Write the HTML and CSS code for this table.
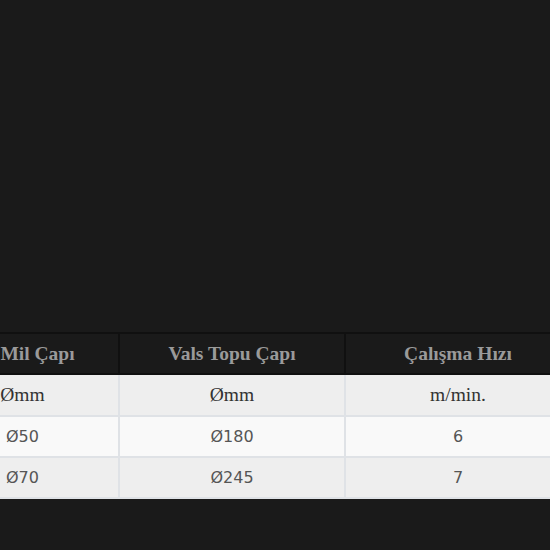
FILE: index.html
```html
<!DOCTYPE html>
<html lang="tr">
<head>
<meta charset="utf-8">
<title>Tablo</title>
<link rel="stylesheet" href="styles.css">
</head>
<body>
<div class="page">
  <div class="spacer"></div>
  <div class="table-wrap">
    <table class="spec">
      <colgroup>
        <col class="c1">
        <col class="c2">
        <col class="c3">
      </colgroup>
      <thead>
        <tr>
          <th class="first">Mil Çapı</th>
          <th>Vals Topu Çapı</th>
          <th>Çalışma Hızı</th>
        </tr>
      </thead>
      <tbody>
        <tr class="units">
          <td class="unit">Ømm</td>
          <td class="unit">Ømm</td>
          <td class="unit">m/min.</td>
        </tr>
        <tr class="even">
          <td>Ø50</td>
          <td>Ø180</td>
          <td>6</td>
        </tr>
        <tr class="odd">
          <td>Ø70</td>
          <td>Ø245</td>
          <td>7</td>
        </tr>
      </tbody>
    </table>
  </div>
</div>
</body>
</html>
```

FILE: styles.css
```css
html, body {
  margin: 0;
  padding: 0;
  background: #1a1a1a;
  overflow: hidden;
}

.page {
  width: 550px;
  height: 550px;
  overflow: hidden;
}

.spacer {
  height: 332px;
}

.table-wrap {
  margin-left: -75px;
}

.spec {
  border-collapse: collapse;
  table-layout: fixed;
  width: 645px;
}

.spec col.c1 { width: 193px; }
.spec col.c2 { width: 226px; }
.spec col.c3 { width: 226px; }

.spec th,
.spec td {
  text-align: center;
  vertical-align: middle;
  padding: 0;
}

.spec th {
  height: 39px;
  background: #1a1a1a;
  color: #9a9a9a;
  font-family: "Liberation Serif", "Times New Roman", serif;
  font-weight: bold;
  font-size: 19.5px;
  border: 2px solid #101010;
}

.spec th.first {
  padding-left: 30px;
}

.spec td {
  height: 40px;
  border: 2px solid #dfe2e6;
  color: #555555;
  font-family: "DejaVu Sans", Verdana, sans-serif;
  font-size: 16px;
}

.spec td.unit {
  background: #eeeeee;
  color: #333333;
  font-family: "Liberation Serif", "Times New Roman", serif;
  font-size: 19.5px;
}

.spec tr.even td {
  height: 39px;
  background: #f9f9f9;
}

.spec tr.odd td {
  height: 39px;
  background: #eeeeee;
}
```
